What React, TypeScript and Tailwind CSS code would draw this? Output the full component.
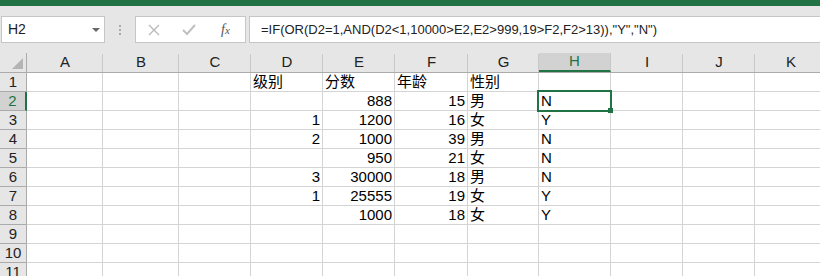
import React from "react";

const cols = ["A", "B", "C", "D", "E", "F", "G", "H", "I", "J", "K"];
const colW = ["w-[76px]", "w-[76px]", "w-[72px]", "w-[72px]", "w-[72px]", "w-[73px]", "w-[71px]", "w-[72px]", "w-[72px]", "w-[72px]", "w-[72px]"];

// D, E, F, G, H
const data: (string | number | null)[][] = [
  ["级别", "分数", "年龄", "性别", null],
  [null, 888, 15, "男", "N"],
  [1, 1200, 16, "女", "Y"],
  [2, 1000, 39, "男", "N"],
  [null, 950, 21, "女", "N"],
  [3, 30000, 18, "男", "N"],
  [1, 25555, 19, "女", "Y"],
  [null, 1000, 18, "女", "Y"],
  [null, null, null, null, null],
  [null, null, null, null, null],
  [null, null, null, null, null],
];

const font = { fontFamily: '"Liberation Sans", "Noto Sans CJK SC", sans-serif' };

const App = () => {
  return (
    <div className="w-[820px] h-[276px] overflow-hidden bg-white text-black" style={font}>
      <div className="h-[6px] bg-[#217346]" />
      {/* formula bar */}
      <div className="h-[47px] bg-[#e6e6e6] pt-[10px]">
        <div className="flex items-start h-[27px]">
          <div className="ml-[1px] w-[104px] h-[27px] bg-white border border-[#c6c6c6] flex items-center justify-between pl-[6px] pr-[4px] text-[14px] text-[#222]">
            <span>H2</span>
            <span className="w-0 h-0 border-l-[4px] border-r-[4px] border-t-[4px] border-l-transparent border-r-transparent border-t-[#666]" />
          </div>
          <div className="w-[30px] h-[27px] flex flex-col items-center justify-center gap-[2px]">
            <span className="w-[2px] h-[2px] bg-[#aaa]" />
            <span className="w-[2px] h-[2px] bg-[#aaa]" />
            <span className="w-[2px] h-[2px] bg-[#aaa]" />
          </div>
          <div className="w-[111px] h-[27px] bg-white border border-[#c6c6c6] flex items-center">
            <svg width="12" height="12" viewBox="0 0 12 12" className="ml-[12px]">
              <path d="M1 1 L11 11 M11 1 L1 11" stroke="#b8b8b8" strokeWidth="1.3" fill="none" />
            </svg>
            <svg width="14" height="12" viewBox="0 0 14 12" className="ml-[22px]">
              <path d="M1 6 L5 10 L13 1" stroke="#c0c0c0" strokeWidth="2" fill="none" />
            </svg>
            <span className="ml-[25px] text-[14px] italic text-[#555]" style={{ fontFamily: '"Liberation Serif", serif' }}>
              f<span className="text-[11px]">x</span>
            </span>
          </div>
          <div className="ml-[3px] flex-1 h-[27px] bg-white border border-[#c6c6c6] border-r-0 flex items-center pl-[11px] text-[13px] text-[#222] whitespace-nowrap">
            =IF(OR(D2=1,AND(D2&lt;1,10000&gt;E2,E2&gt;999,19&gt;F2,F2&gt;13)),"Y","N")
          </div>
        </div>
      </div>
      {/* column header */}
      <div className="flex h-[20px] bg-[#e6e6e6] border-b border-[#ababab]">
        <div className="w-[27px] shrink-0 h-full border-r border-[#ababab] flex items-end justify-end pr-[3px] pb-[3px]">
          <svg width="11" height="11" viewBox="0 0 11 11">
            <path d="M11 0 L11 11 L0 11 Z" fill="#b4b4b4" />
          </svg>
        </div>
        {cols.map((c, i) =>
          c === "H" ? (
            <div key={c} className={`${colW[i]} shrink-0 h-full bg-[#d2d2d2] border-r border-[#c8c8c8] border-b-2 border-b-[#217346] flex items-center justify-center text-[15px] text-[#217346]`}>
              {c}
            </div>
          ) : (
            <div key={c} className={`${colW[i]} shrink-0 h-full flex items-center justify-center text-[15px] text-[#222] relative`}>
              {c}
              <span className="absolute right-0 top-[1px] bottom-0 w-px bg-[#c8c8c8]" />
            </div>
          )
        )}
      </div>
      {/* rows */}
      {data.map((row, r) => {
        const rn = r + 1;
        const sel = rn === 2;
        return (
          <div key={rn} className="flex h-[19px]">
            <div
              className={`w-[27px] shrink-0 h-full border-b flex items-center justify-center text-[15px] ${
                sel
                  ? "bg-[#d2d2d2] border-r-2 border-r-[#217346] border-b-[#ababab] text-[#217346]"
                  : "bg-[#e6e6e6] border-r border-r-[#ababab] border-b-[#ababab] text-[#222]"
              }`}
            >
              {rn}
            </div>
            {cols.map((c, i) => {
              const di = i - 3;
              const v = di >= 0 && di < 5 ? row[di] : null;
              const isNum = typeof v === "number";
              return (
                <div
                  key={c}
                  className={`${colW[i]} shrink-0 h-full border-r border-b border-[#d4d4d4] flex items-end text-[15px] leading-[18px] relative ${
                    isNum ? "justify-end pr-[2px]" : "justify-start pl-[2px]"
                  } ${sel && c === "H" ? "z-10" : ""}`}
                >
                  {v !== null && <span>{v}</span>}
                  {sel && c === "H" && (
                    <>
                      <span className="absolute -left-[2px] -top-[2px] w-[75px] h-[22px] border-2 border-[#217346]" />
                      <span className="absolute left-[69px] top-[16px] w-[5px] h-[5px] bg-[#217346]" />
                    </>
                  )}
                </div>
              );
            })}
          </div>
        );
      })}
    </div>
  );
};

export default App;
